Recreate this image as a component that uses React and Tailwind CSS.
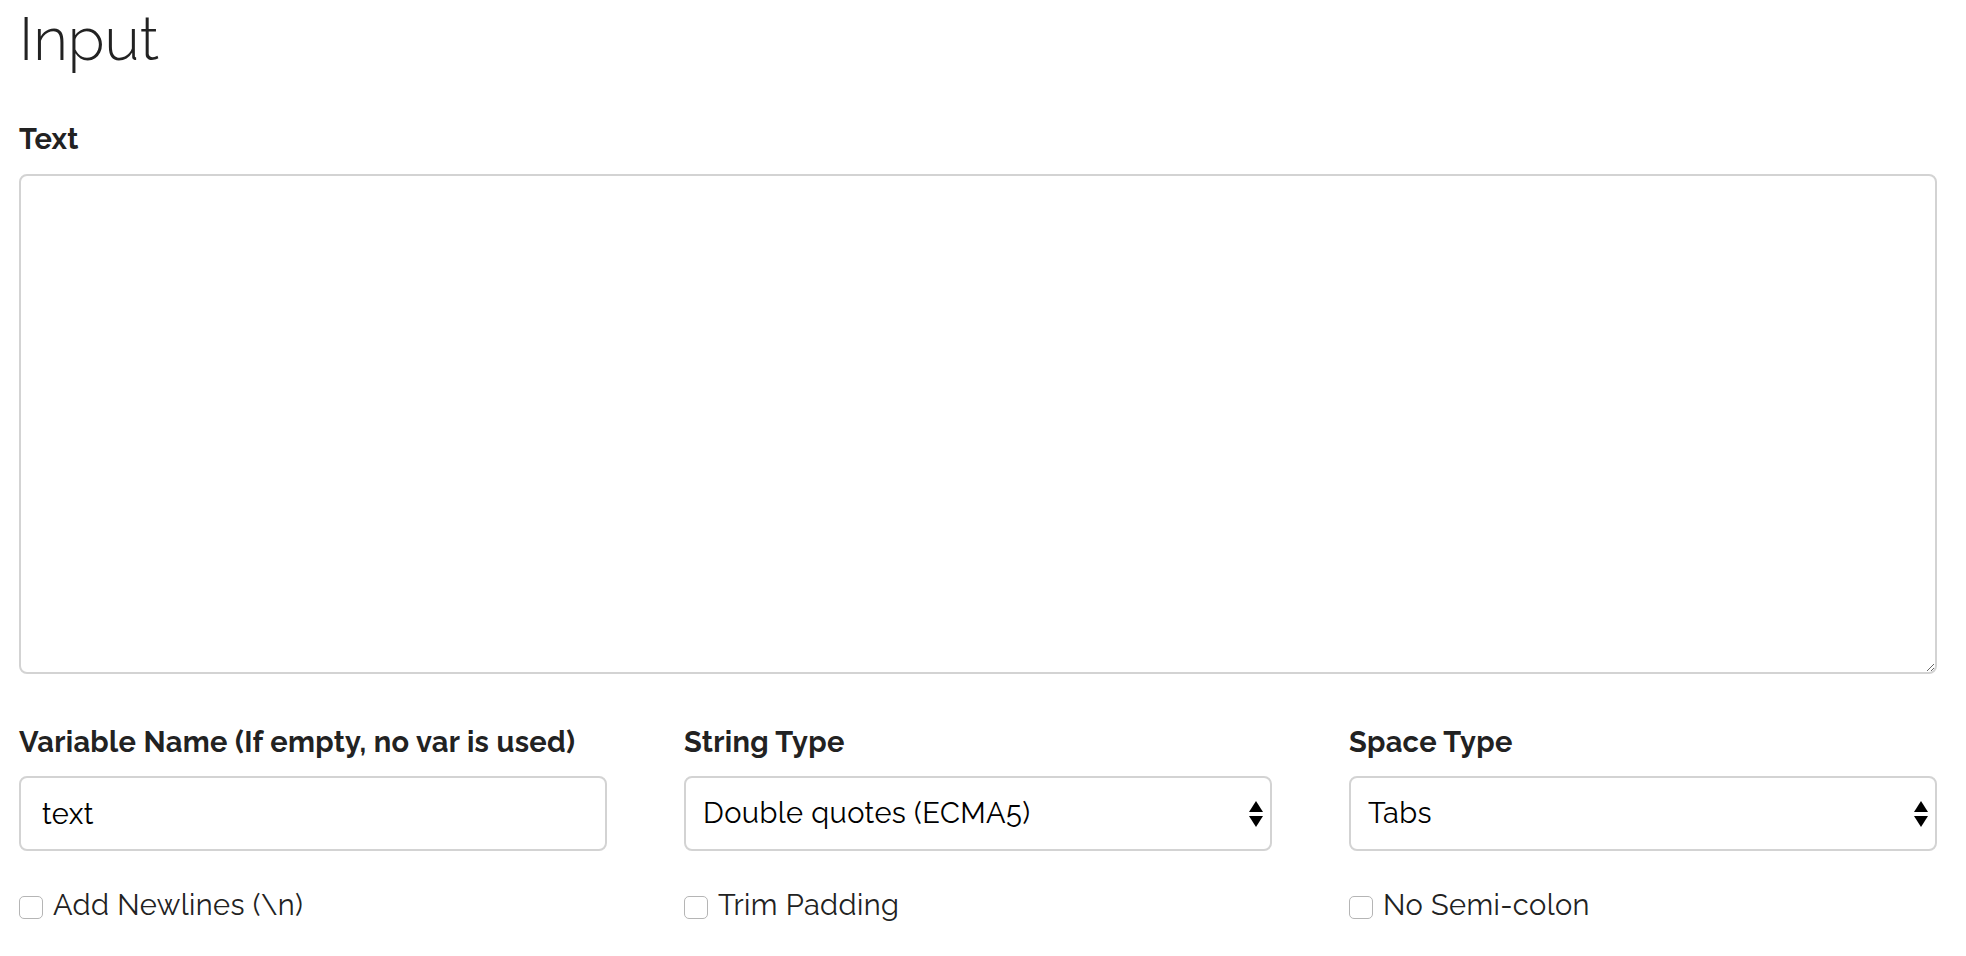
import React, { useState } from "react";

function Arrows() {
  return (
    <svg
      className="pointer-events-none absolute right-[9px] top-1/2 -translate-y-1/2"
      width="14"
      height="26"
      viewBox="0 0 14 26"
    >
      <path d="M7 0 L14 11 L0 11 Z" fill="#000" />
      <path d="M0 15 L14 15 L7 26 Z" fill="#000" />
    </svg>
  );
}

function Check({ label, checked, onChange }) {
  return (
    <label className="flex items-center gap-[10px] cursor-pointer select-none">
      <input
        type="checkbox"
        checked={checked}
        onChange={onChange}
        className="peer sr-only"
      />
      <span className="block w-[24px] h-[23px] mt-[4px] rounded-[5px] border-[1.5px] border-[#b5b5b5] bg-white peer-checked:bg-[#3b82f6]" />
      <span className="text-[29px] tracking-[0.4px] leading-[34px] text-[#222]">
        {label}
      </span>
    </label>
  );
}

export default function App() {
  const [text, setText] = useState("");
  const [varName, setVarName] = useState("text");
  const [stringType, setStringType] = useState("double");
  const [spaceType, setSpaceType] = useState("tabs");
  const [newlines, setNewlines] = useState(false);
  const [trim, setTrim] = useState(false);
  const [noSemi, setNoSemi] = useState(false);

  const field =
    "w-full h-[75px] rounded-[8px] border-2 border-[#d3d3d3] bg-white text-[29px] tracking-[0.4px] text-black outline-none";
  const label = "text-[29px] tracking-[0.3px] font-bold leading-[34px]";

  return (
    <div
      className="min-h-screen bg-white text-[#222] pl-[19px] pr-[29px]"
      style={{ fontFamily: "'Raleway', Lato, 'Open Sans', sans-serif" }}
    >
      <h1 className="text-[60px] font-light leading-[72px] pt-[3px] text-[#222]">
        Input
      </h1>

      <div className={label + " mt-[47px]"}>Text</div>
      <textarea
        value={text}
        onChange={(e) => setText(e.target.value)}
        className="mt-[18px] block w-full h-[500px] rounded-[8px] border-2 border-[#d3d3d3] bg-white p-4 text-[29px] outline-none"
      />

      <div className="mt-[51px] grid grid-cols-3 gap-x-[77px]">
        <div>
          <div className={label}>Variable Name (If empty, no var is used)</div>
          <input
            value={varName}
            onChange={(e) => setVarName(e.target.value)}
            className={field + " mt-[17px] px-[21px]"}
          />
          <div className="mt-[37px]">
            <Check
              label="Add Newlines (\n)"
              checked={newlines}
              onChange={() => setNewlines(!newlines)}
            />
          </div>
        </div>

        <div>
          <div className={label}>String Type</div>
          <div className="relative mt-[17px]">
            <select
              value={stringType}
              onChange={(e) => setStringType(e.target.value)}
              className={field + " appearance-none px-[17px]"}
            >
              <option value="double">Double quotes (ECMA5)</option>
              <option value="single">Single quotes (ECMA5)</option>
              <option value="template">Template literal (ECMA6)</option>
            </select>
            <Arrows />
          </div>
          <div className="mt-[37px]">
            <Check
              label="Trim Padding"
              checked={trim}
              onChange={() => setTrim(!trim)}
            />
          </div>
        </div>

        <div>
          <div className={label}>Space Type</div>
          <div className="relative mt-[17px]">
            <select
              value={spaceType}
              onChange={(e) => setSpaceType(e.target.value)}
              className={field + " appearance-none px-[17px]"}
            >
              <option value="tabs">Tabs</option>
              <option value="spaces">Spaces</option>
            </select>
            <Arrows />
          </div>
          <div className="mt-[37px]">
            <Check
              label="No Semi-colon"
              checked={noSemi}
              onChange={() => setNoSemi(!noSemi)}
            />
          </div>
        </div>
      </div>
    </div>
  );
}
